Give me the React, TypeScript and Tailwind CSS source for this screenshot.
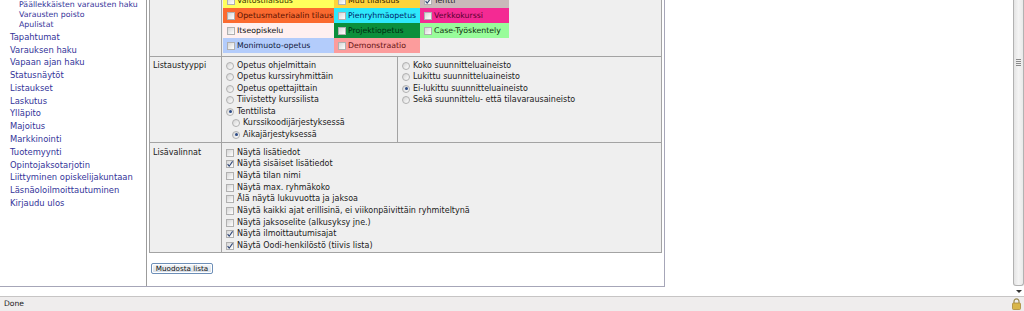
import React from 'react';

const subLinks = ['Päällekkäisten varausten haku', 'Varausten poisto', 'Apulistat'];

const mainLinks = [
  'Tapahtumat',
  'Varauksen haku',
  'Vapaan ajan haku',
  'Statusnäytöt',
  'Listaukset',
  'Laskutus',
  'Ylläpito',
  'Majoitus',
  'Markkinointi',
  'Tuotemyynti',
  'Opintojaksotarjotin',
  'Liittyminen opiskelijakuntaan',
  'Läsnäoloilmoittautuminen',
  'Kirjaudu ulos',
];

function Box({ checked = false }: { checked?: boolean }) {
  return (
    <span className="relative inline-block h-[8px] w-[8px] shrink-0 border border-[#b0b0b0] bg-linear-to-br from-[#d6d6d6] to-white">
      {checked && (
        <svg className="absolute -left-px -top-px" width="8" height="8" viewBox="0 0 8 8">
          <path d="M1.6 4.2 L3.2 6.2 L6.6 1.4" fill="none" stroke="#2f4676" strokeWidth="1.1" />
        </svg>
      )}
    </span>
  );
}

function Radio({ checked = false }: { checked?: boolean }) {
  return (
    <span className="relative inline-flex h-[8px] w-[8px] shrink-0 items-center justify-center rounded-full border border-[#b0b0b0] bg-linear-to-br from-[#d4d4d4] to-white">
      {checked && <span className="h-[3px] w-[3px] rounded-full bg-[#2b4a86]" />}
    </span>
  );
}

type Cell = { label: string; bg: string; fg: string; checked?: boolean } | null;

const colorCells: Cell[] = [
  { label: 'Väitöstilaisuus', bg: 'bg-[#ffff5c]', fg: 'text-[#333300]' },
  { label: 'Muu tilaisuus', bg: 'bg-[#ffd43a]', fg: 'text-[#332200]' },
  { label: 'Tentti', bg: 'bg-[#c9baba]', fg: 'text-[#222]', checked: true },
  { label: 'Opetusmateriaalin tilaus', bg: 'bg-[#fb6a2f]', fg: 'text-[#5a1000]' },
  { label: 'Pienryhmäopetus', bg: 'bg-[#2ee8fb]', fg: 'text-[#002266]' },
  { label: 'Verkkokurssi', bg: 'bg-[#f42a93]', fg: 'text-[#5a0030]' },
  { label: 'Itseopiskelu', bg: 'bg-[#fff0f0]', fg: 'text-[#111]' },
  { label: 'Projektiopetus', bg: 'bg-[#0b8f3c]', fg: 'text-[#002a10]' },
  { label: 'Case-Työskentely', bg: 'bg-[#98fc9a]', fg: 'text-[#103010]' },
  { label: 'Monimuoto-opetus', bg: 'bg-[#b3ccfb]', fg: 'text-[#111a40]' },
  { label: 'Demonstraatio', bg: 'bg-[#fc9c9c]', fg: 'text-[#661010]' },
  null,
];

const leftRadios = [
  { label: 'Opetus ohjelmittain' },
  { label: 'Opetus kurssiryhmittäin' },
  { label: 'Opetus opettajittain' },
  { label: 'Tiivistetty kurssilista' },
  { label: 'Tenttilista', checked: true },
  { label: 'Kurssikoodijärjestyksessä', nested: true },
  { label: 'Aikajärjestyksessä', nested: true, checked: true },
];

const rightRadios = [
  { label: 'Koko suunnitteluaineisto' },
  { label: 'Lukittu suunnitteluaineisto' },
  { label: 'Ei-lukittu suunnitteluaineisto', checked: true },
  { label: 'Sekä suunnittelu- että tilavarausaineisto' },
];

const extras = [
  { label: 'Näytä lisätiedot' },
  { label: 'Näytä sisäiset lisätiedot', checked: true },
  { label: 'Näytä tilan nimi' },
  { label: 'Näytä max. ryhmäkoko' },
  { label: 'Älä näytä lukuvuotta ja jaksoa' },
  { label: 'Näytä kaikki ajat erillisinä, ei viikonpäivittäin ryhmiteltynä' },
  { label: 'Näytä jaksoselite (alkusyksy jne.)' },
  { label: 'Näytä ilmoittautumisajat', checked: true },
  { label: 'Näytä Oodi-henkilöstö (tiivis lista)', checked: true },
];

function Sidebar() {
  return (
    <div className="w-[147px] shrink-0 border-r border-[#9c9c9c] text-[#333399]">
      <div className="pl-[19px] text-[7.8px] leading-[9.8px]">
        {subLinks.map((l) => (
          <div key={l}>{l}</div>
        ))}
      </div>
      <div className="mt-[1.5px] pl-[10px] text-[8.4px] leading-[12.77px]">
        {mainLinks.map((l) => (
          <div key={l}>{l}</div>
        ))}
      </div>
    </div>
  );
}

function Table() {
  return (
    <div className="-mt-[9px] w-[513px] border border-[#a3a3a3] bg-[#efefef] text-[8px] text-[#1a1a1a]">
      {/* type colours */}
      <div className="flex h-[65px] border-b border-[#a3a3a3]">
        <div className="w-[72px] shrink-0 border-r border-[#a3a3a3]" />
        <div className="pl-px pt-px">
          <div className="grid grid-cols-[111px_86px_89px] grid-rows-[15px_15px_15px_15px]">
            {colorCells.map((c, i) =>
              c ? (
                <div key={i} className={`flex items-center gap-[2px] pl-[4px] text-[7.8px] ${c.bg} ${c.fg}`}>
                  <Box checked={c.checked} />
                  <span className="whitespace-nowrap">{c.label}</span>
                </div>
              ) : (
                <div key={i} />
              )
            )}
          </div>
        </div>
      </div>

      {/* listing type */}
      <div className="flex h-[86px] border-b border-[#a3a3a3]">
        <div className="w-[72px] shrink-0 border-r border-[#a3a3a3] pl-[3px] pt-[3px] leading-[11.5px]">
          Listaustyyppi
        </div>
        <div className="w-[176px] shrink-0 border-r border-[#a3a3a3] pl-[4px] pt-[3px]">
          {leftRadios.map((r) => (
            <div
              key={r.label}
              className={`flex h-[11.5px] items-center gap-[3px] whitespace-nowrap ${r.nested ? 'pl-[6px]' : ''}`}
            >
              <Radio checked={r.checked} />
              <span>{r.label}</span>
            </div>
          ))}
        </div>
        <div className="flex-1 pl-[4px] pt-[3px]">
          {rightRadios.map((r) => (
            <div key={r.label} className="flex h-[11.5px] items-center gap-[3px] whitespace-nowrap">
              <Radio checked={r.checked} />
              <span>{r.label}</span>
            </div>
          ))}
        </div>
      </div>

      {/* extra options */}
      <div className="flex h-[109px]">
        <div className="w-[72px] shrink-0 border-r border-[#a3a3a3] pl-[3px] pt-[4px] leading-[11.6px]">
          Lisävalinnat
        </div>
        <div className="flex-1 pl-[4px] pt-[4px]">
          {extras.map((e) => (
            <div key={e.label} className="flex h-[11.65px] items-center gap-[3px] whitespace-nowrap">
              <Box checked={e.checked} />
              <span>{e.label}</span>
            </div>
          ))}
        </div>
      </div>
    </div>
  );
}

function Scrollbar() {
  return (
    <div className="flex w-[11px] shrink-0 flex-col">
      <div className="relative h-[286px] rounded-b-[3px] border border-t-0 border-[#b2b2b2] bg-linear-to-r from-[#e4e4e4] via-[#f4f4f4] to-[#e9e9e9]">
        <div className="absolute left-[2px] top-[59px] flex w-[5px] flex-col gap-[1px]">
          <span className="h-px bg-[#8a8a8a]" />
          <span className="h-px bg-[#8a8a8a]" />
          <span className="h-px bg-[#8a8a8a]" />
          <span className="h-px bg-[#8a8a8a]" />
        </div>
      </div>
      <div className="flex h-[10px] items-center justify-center">
        <span className="h-0 w-0 border-x-[3px] border-t-[3px] border-x-transparent border-t-[#333]" />
      </div>
    </div>
  );
}

export default function App() {
  return (
    <div className="flex h-[311px] w-[1024px] flex-col overflow-hidden bg-white font-['DejaVu_Sans',Verdana,sans-serif]">
      <div className="flex h-[296px] shrink-0">
        <div className="flex-1">
          <div className="flex h-[287px] w-[665px] border-b border-r border-[#a6a6b8]">
            <Sidebar />
            <div className="flex-1 pl-[2px]">
              <Table />
              <button className="ml-[2px] mt-[10px] flex h-[11px] w-[62px] items-center justify-center rounded-[2px] border border-[#6d8fb8] bg-linear-to-b from-[#f4f6f8] to-[#d6dde6] text-[7.2px] leading-none text-[#111] shadow-[inset_0_0_0_1px_#fff]">
                Muodosta lista
              </button>
            </div>
          </div>
        </div>
        <Scrollbar />
      </div>
      <div className="flex h-[15px] items-center justify-between border-t border-[#c7c5c5] bg-[#efeded] pl-[4px] pr-[3px]">
        <span className="text-[7.6px] text-[#222]">Done</span>
        <svg width="9" height="12" viewBox="0 0 9 12">
          <path d="M2 5 V3.4 a2.5 2.5 0 0 1 5 0 V5" fill="none" stroke="#9a8a50" strokeWidth="1.2" />
          <rect x="0.5" y="5" width="8" height="6.5" rx="1" fill="#d9b64a" stroke="#a8893a" strokeWidth="0.8" />
        </svg>
      </div>
    </div>
  );
}
